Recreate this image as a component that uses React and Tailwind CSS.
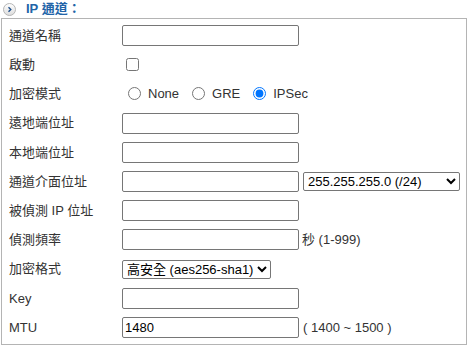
import { useState } from "react";

const font = { fontFamily: '"Liberation Sans", Arial, "Noto Sans CJK TC", sans-serif' };

function TextBox({ value = "" }) {
  return (
    <input
      type="text"
      defaultValue={value}
      className="h-[21px] w-[177px] border border-[#767676] rounded-[2px] bg-white px-[2px] text-[13px] text-black align-middle"
    />
  );
}

function Radio({ label, checked, onPick }) {
  return (
    <label className="inline-flex items-center mr-[7px]">
      <input
        type="radio"
        name="mode"
        checked={checked}
        onChange={onPick}
        className="w-[13px] h-[13px] ml-[6px] accent-[#0075ff]"
      />
      <span className="ml-[7px]">{label}</span>
    </label>
  );
}

export default function App() {
  const [mode, setMode] = useState("IPSec");

  const rows = [
    { label: "通道名稱", field: <TextBox /> },
    {
      label: "啟動",
      field: <input type="checkbox" className="w-[13px] h-[13px] ml-[4px] align-middle" />,
    },
    {
      label: "加密模式",
      field: (
        <div className="flex items-center">
          {["None", "GRE", "IPSec"].map((m) => (
            <Radio key={m} label={m} checked={mode === m} onPick={() => setMode(m)} />
          ))}
        </div>
      ),
    },
    { label: "遠地端位址", field: <TextBox /> },
    { label: "本地端位址", field: <TextBox /> },
    {
      label: "通道介面位址",
      field: (
        <div className="flex items-center gap-[4px]">
          <TextBox />
          <select className="h-[19px] w-[157px] border border-[#767676] rounded-[2px] bg-white text-[13px] text-black">
            <option>255.255.255.0 (/24)</option>
          </select>
        </div>
      ),
    },
    { label: "被偵測 IP 位址", field: <TextBox /> },
    {
      label: "偵測頻率",
      field: (
        <div className="flex items-center gap-[3px]">
          <TextBox />
          <span>秒 (1-999)</span>
        </div>
      ),
    },
    {
      label: "加密格式",
      field: (
        <select className="h-[19px] border border-[#767676] rounded-[2px] bg-white text-[13px] text-black">
          <option>高安全 (aes256-sha1)</option>
        </select>
      ),
    },
    { label: "Key", field: <TextBox /> },
    {
      label: "MTU",
      field: (
        <div className="flex items-center gap-[4px]">
          <TextBox value="1480" />
          <span>( 1400 ~ 1500 )</span>
        </div>
      ),
    },
  ];

  return (
    <div className="w-[469px] h-[346px] bg-white text-[13px] text-[#333]" style={font}>
      {/* Title */}
      <div className="flex items-center h-[18px] pl-[3px]">
        <svg width="13" height="13" viewBox="0 0 13 13">
          <defs>
            <linearGradient id="g" x1="0" y1="0" x2="0" y2="1">
              <stop offset="0" stopColor="#ffffff" />
              <stop offset="1" stopColor="#dcdcdc" />
            </linearGradient>
          </defs>
          <circle cx="6.5" cy="6.5" r="6" fill="url(#g)" stroke="#b5b5b5" />
          <path d="M5.5 4.2 L7.8 6.5 L5.5 8.8" fill="none" stroke="#1f4f8a" strokeWidth="1.4" />
        </svg>
        <span className="ml-[10px] font-semibold text-[#2264a8]">IP 通道：</span>
      </div>

      {/* Form box */}
      <div className="ml-[1px] w-[466px] h-[327px] border border-[#b4b4b4] pt-[2px]">
        {rows.map((r) => (
          <div key={r.label} className="flex items-center h-[29.2px]">
            <div className="w-[120px] pl-[7px]">{r.label}</div>
            <div className="flex items-center">{r.field}</div>
          </div>
        ))}
      </div>
    </div>
  );
}
